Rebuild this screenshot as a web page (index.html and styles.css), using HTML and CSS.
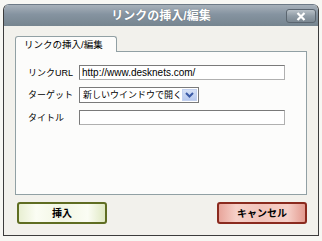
FILE: index.html
```html
<!DOCTYPE html>
<html lang="ja">
<head>
    <meta charset="UTF-8">
    <title>リンクの挿入/編集</title>
    <link rel="stylesheet" href="styles.css">
</head>
<body>
    <div class="window">
        <div class="titlebar">
            <span class="title">リンクの挿入/編集</span>
            <button class="close-btn" title="閉じる">
                <svg width="10" height="9" viewBox="0 0 10 9">
                    <path d="M1.5 1 L8.5 8 M8.5 1 L1.5 8" stroke="#fff" stroke-width="2.2" fill="none"/>
                </svg>
            </button>
        </div>
        <div class="content">
            <div class="tabs">
                <div class="tab">リンクの挿入/編集</div>
            </div>
            <div class="panel">
                <div class="form-row">
                    <label class="label">リンクURL</label>
                    <input type="text" class="text-input" value="http://www.desknets.com/">
                </div>
                <div class="form-row">
                    <label class="label">ターゲット</label>
                    <div class="select">
                        <span class="select-text">新しいウインドウで開く</span>
                        <span class="select-arrow">
                            <svg width="9" height="6" viewBox="0 0 9 6">
                                <path d="M1 1 L4.5 4.5 L8 1" stroke="#3b5aa5" stroke-width="2" fill="none"/>
                            </svg>
                        </span>
                    </div>
                </div>
                <div class="form-row">
                    <label class="label">タイトル</label>
                    <input type="text" class="text-input" value="">
                </div>
            </div>
            <div class="buttons">
                <button class="btn btn-insert">挿入</button>
                <button class="btn btn-cancel">キャンセル</button>
            </div>
        </div>
    </div>
</body>
</html>
```

FILE: styles.css
```css
body {
    margin: 0;
    background-color: #f7f7f3;
    font-family: "Liberation Sans", "Noto Sans CJK JP", sans-serif;
}
.window {
    margin: 4px 0 0 3px;
    width: 314px;
    height: 230px;
    border: 1px solid #3c3c3c;
    border-top-color: #6d7a86;
    border-radius: 6px 6px 0 0;
    background-color: #f2f1ec;
    display: flex;
    flex-direction: column;
    overflow: hidden;
}
.titlebar {
    height: 21px;
    background: linear-gradient(#a7b1ba, #8593a0 45%, #76858f);
    display: flex;
    align-items: center;
    justify-content: center;
    position: relative;
}
.title {
    color: #fff;
    font-size: 12px;
    font-weight: bold;
    line-height: 14px;
    text-shadow: 0 0 1px #5a6670;
}
.close-btn {
    position: absolute;
    right: 2px;
    top: 4px;
    width: 30px;
    height: 14px;
    padding: 0;
    border: 1px solid #5b6670;
    border-radius: 3px;
    background: linear-gradient(#b9c1c8, #909ca6 50%, #7b8791);
    display: flex;
    align-items: center;
    justify-content: center;
}
.content {
    flex-grow: 1;
    padding: 10px 11px 0 11px;
}
.tabs {
    display: flex;
}
.tab {
    width: 92px;
    height: 15px;
    padding-left: 8px;
    border: 1px solid #91a0a4;
    border-bottom: none;
    border-radius: 3px 3px 0 0;
    background-color: #fcfcfb;
    font-size: 9.5px;
    line-height: 15px;
    color: #000;
    white-space: nowrap;
    position: relative;
    z-index: 1;
    margin-bottom: -1px;
}
.panel {
    height: 129px;
    border: 1px solid #91a0a4;
    background-color: #fcfcfb;
    padding: 13px 12px 0 12px;
    display: flex;
    flex-direction: column;
    gap: 7px;
}
.form-row {
    display: flex;
    align-items: center;
}
.label {
    width: 51px;
    font-size: 9px;
    line-height: 12px;
    color: #000;
    white-space: nowrap;
}
.text-input {
    width: 200px;
    height: 13px;
    box-sizing: content-box;
    padding: 0 2px;
    margin: 0;
    border: 1px solid #7a7a7a;
    border-color: #7a7a7a #b0b0b0 #b0b0b0 #7a7a7a;
    background: #fff;
    font-family: "Liberation Sans", sans-serif;
    font-size: 10px;
    line-height: 13px;
    color: #000;
    outline: none;
}
.select {
    width: 114px;
    height: 14px;
    border: 1px solid #7a7a7a;
    background: #fff;
    display: flex;
    align-items: center;
    justify-content: space-between;
    padding: 0 1px 0 3px;
    box-sizing: content-box;
}
.select-text {
    font-size: 9px;
    line-height: 13px;
    white-space: nowrap;
}
.select-arrow {
    width: 15px;
    height: 12px;
    background: linear-gradient(#d6e1f6, #b8c9ee);
    border: 1px solid #c3d1ef;
    box-sizing: border-box;
    display: flex;
    align-items: center;
    justify-content: center;
}
.buttons {
    display: flex;
    justify-content: space-between;
    padding: 7px 0 0 2px;
}
.btn {
    width: 90px;
    height: 22px;
    border-radius: 3px;
    font-family: "Noto Sans CJK JP", sans-serif;
    font-size: 10px;
    font-weight: bold;
    color: #000;
    padding: 0;
    line-height: 18px;
}
.btn-insert {
    border: 2px solid #5f6d22;
    background: linear-gradient(90deg, #e8efd2, #fbfdf4 20%, #f2f6e3 50%, #fbfdf4 80%, #dfe8c2);
}
.btn-cancel {
    border: 2px solid #8a2a1e;
    background: linear-gradient(90deg, #e8a59b, #f6d0c8 20%, #f2c4bb 50%, #f6d0c8 80%, #e39a8f);
}
```
